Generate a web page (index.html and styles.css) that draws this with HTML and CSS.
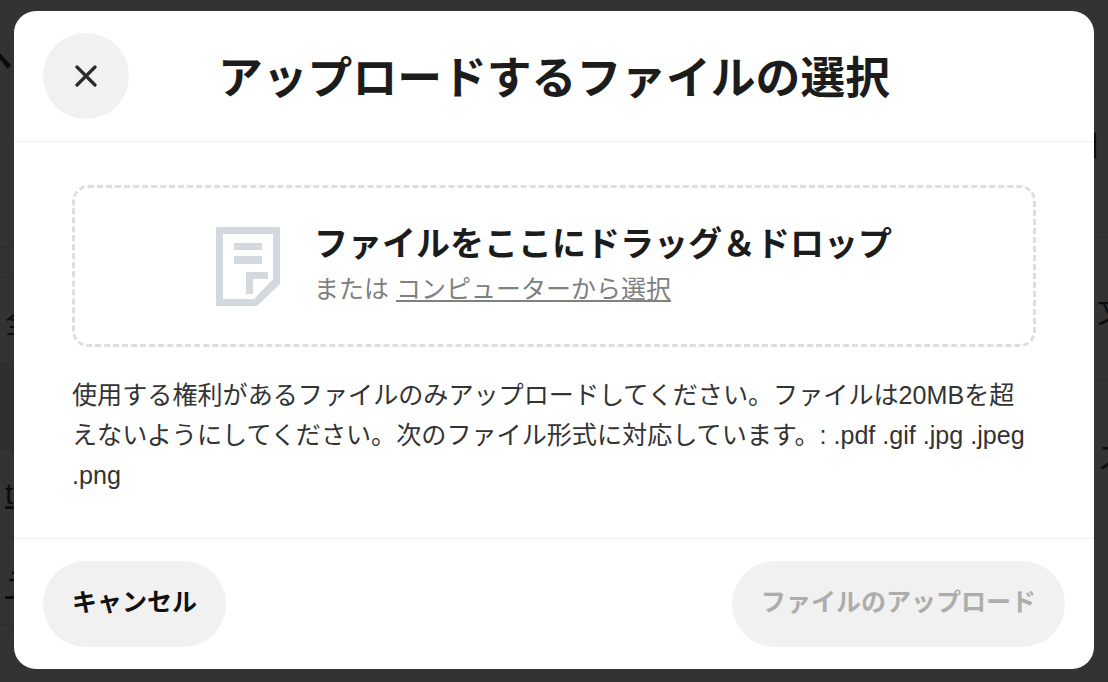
FILE: index.html
```html
<!DOCTYPE html>
<html lang="ja">
<head>
<meta charset="utf-8">
<title>アップロードするファイルの選択</title>
<link rel="stylesheet" href="styles.css">
</head>
<body>
<div class="page">
  <div class="side side-left">
    <div class="row row-a"><span class="caret">ヘ</span></div>
    <div class="row row-b"></div>
    <div class="row row-c"><span>全</span></div>
    <div class="row row-d"></div>
    <div class="row row-e"><u>t</u></div>
    <div class="row row-f"><u>ラ</u></div>
    <div class="row row-g"></div>
  </div>
  <div class="side side-right">
    <div class="rrow rrow-a"></div>
    <div class="rrow rrow-b"><span>口</span></div>
    <div class="rrow rrow-c"></div>
    <div class="rrow rrow-d"><span>文</span></div>
    <div class="rrow rrow-e"><span>ス</span></div>
    <div class="rrow rrow-f"></div>
  </div>
</div>
<section class="modal">
  <header class="modal-head">
    <button class="close" aria-label="閉じる">
      <svg class="close-icon" viewBox="0 0 22 22" width="22" height="22"><path d="M2 2 L20 20 M20 2 L2 20"/></svg>
    </button>
    <h1 class="title">アップロードするファイルの選択</h1>
  </header>
  <div class="modal-body">
    <div class="drop">
      <svg class="doc" viewBox="0 0 64 79" width="64" height="79">
        <path class="doc-fill" fill-rule="evenodd" d="M0 0H64V57L41 79H0Z M7 7V72H38L57 52V7Z"/>
        <path class="doc-fill" d="M18 16H46V23H18Z M18 29H46V37H18Z M30 45H52V52H37V67H30Z"/>
      </svg>
      <div class="drop-text">
        <div class="drop-title">ファイルをここにドラッグ＆ドロップ</div>
        <div class="drop-sub">または <a class="drop-link">コンピューターから選択</a></div>
      </div>
    </div>
    <p class="note">使用する権利があるファイルのみアップロードしてください。ファイルは20MBを超えないようにしてください。次のファイル形式に対応しています。: .pdf .gif .jpg .jpeg .png</p>
  </div>
  <footer class="modal-foot">
    <button class="btn">キャンセル</button>
    <button class="btn btn-disabled">ファイルのアップロード</button>
  </footer>
</section>
</body>
</html>
```
FILE: styles.css
```css
* { box-sizing: border-box; }
html, body { margin: 0; height: 100%; }
body {
  width: 1108px;
  height: 682px;
  overflow: hidden;
  background: #333;
  font-family: "Liberation Sans", "Noto Sans CJK JP", sans-serif;
  color: #1c1c1c;
  position: relative;
}
.page { display: flex; justify-content: space-between; height: 682px; }
.side { overflow: hidden; color: #0c0c0c; font-size: 30px; }
.side-left { width: 14px; display: flex; flex-direction: column; }
.side-right { width: 14px; display: flex; flex-direction: column; }
.row, .rrow { border-bottom: 1px solid #2d2d2d; display: flex; align-items: center; white-space: nowrap; }
.row { padding-left: 5px; }
.row-a { height: 248px; align-items: flex-start; padding-left: 0; }
.caret { margin: 34px 0 0 -18px; font-weight: 700; }
.row-b { height: 30px; }
.row-c { height: 85px; }
.row-d { height: 87px; background: #2f2f2f; }
.row-e { height: 88px; }
.row-f { height: 87px; }
.row-g { height: 57px; border-bottom: 0; }
.rrow-a { height: 95px; }
.rrow-b { height: 143px; padding-left: 0; align-items: flex-start; }
.rrow-b span { margin: 24px 0 0 -26px; font-size: 32px; }
.rrow-c { height: 0; border: 0; }
.rrow-d { height: 142px; padding-left: 3px; }
.rrow-e { height: 150px; padding-left: 3px; }
.rrow-f { height: 152px; border-bottom: 0; }

.modal {
  position: absolute;
  left: 14px;
  top: 11px;
  width: 1080px;
  height: 658px;
  background: #fff;
  border-radius: 22px;
  display: flex;
  flex-direction: column;
}
.modal-head {
  display: grid;
  grid-template-columns: 86px 1fr 86px;
  align-items: center;
  height: 131px;
  padding: 22px 29px;
  border-bottom: 1px solid #efefef;
}
.close {
  width: 86px;
  height: 86px;
  border: 0;
  padding: 0;
  border-radius: 50%;
  background: #f1f1f1;
  display: flex;
  align-items: center;
  justify-content: center;
}
.close-icon { stroke: #2b2b2b; stroke-width: 3.2; stroke-linecap: round; fill: none; }
.title {
  margin: 4px 0 0;
  text-align: center;
  font-size: 44.8px;
  line-height: 60px;
  font-weight: 700;
  color: #1c1c1c;
}
.modal-body { flex: 1; padding: 43px 58px 0; }
.drop {
  height: 162px;
  border: 3px dashed #dedede;
  border-radius: 16px;
  display: flex;
  align-items: center;
  justify-content: center;
  gap: 34px;
}
.doc-fill { fill: #d3d9de; }
.drop-text { display: flex; flex-direction: column; }
.drop-title { font-size: 34px; line-height: 46px; font-weight: 700; color: #1c1c1c; }
.drop-sub { font-size: 25px; line-height: 44px; color: #808080; }
.drop-link { text-decoration: underline; }
.note {
  margin: 28px 0 0;
  padding-right: 6px;
  font-size: 25.1px;
  line-height: 40px;
  color: #333;
}
.modal-foot {
  height: 131px;
  padding: 22px 29px;
  border-top: 1px solid #efefef;
  display: flex;
  justify-content: space-between;
  align-items: center;
}
.btn {
  height: 86px;
  padding: 0 0 9px;
  width: 183px;
  border: 0;
  border-radius: 43px;
  background: #f1f1f1;
  font-family: inherit;
  font-size: 25px;
  font-weight: 700;
  color: #111;
}
.btn-disabled { color: #adadad; width: 333px; }
```
